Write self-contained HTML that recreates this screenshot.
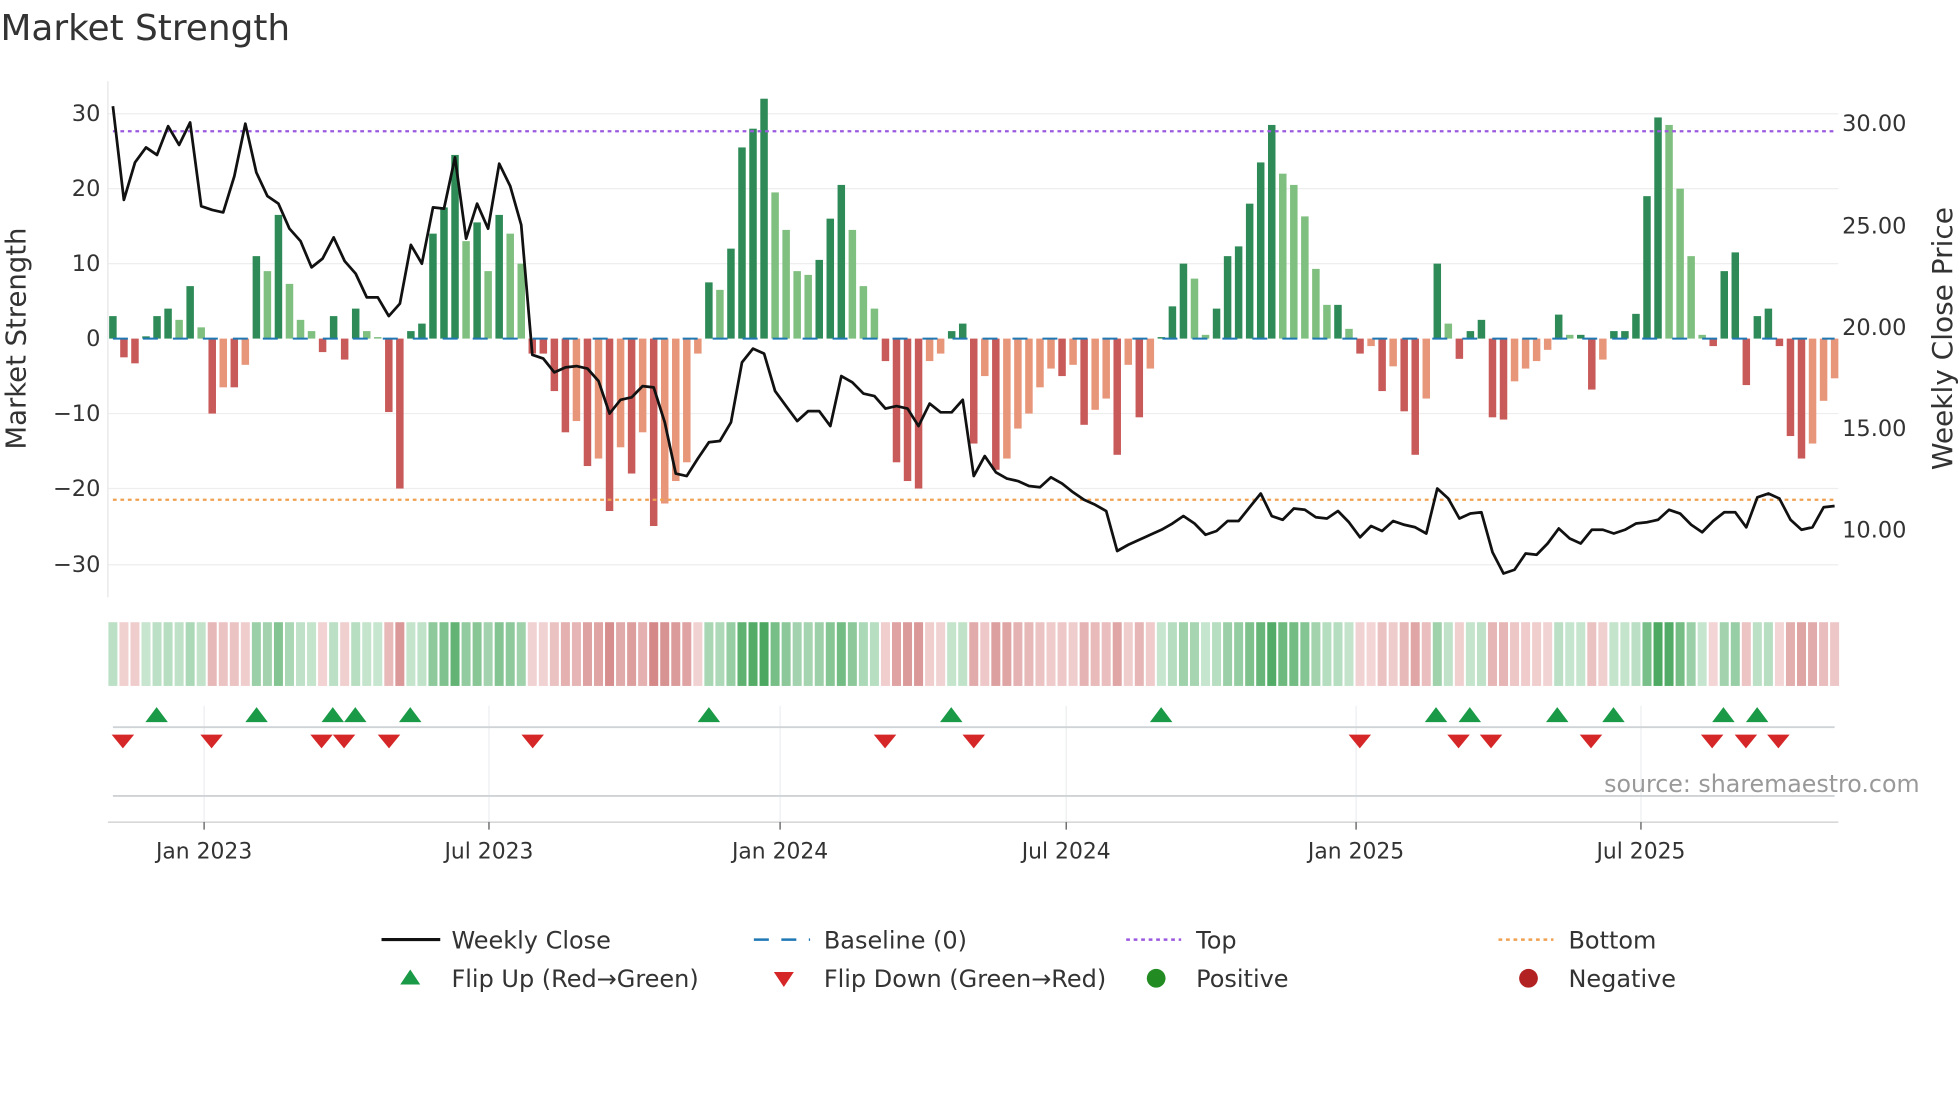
<!DOCTYPE html>
<html><head><meta charset="utf-8"><style>
html,body{margin:0;padding:0;background:#fff;width:1960px;height:1102px;overflow:hidden}
svg{display:block;font-family:"DejaVu Sans","Liberation Sans",sans-serif}
</style></head><body>
<svg id="s" width="1960" height="1102" viewBox="0 0 1568 882" xmlns="http://www.w3.org/2000/svg">
<text x="0" y="32" font-size="28.7" fill="#333">Market Strength</text>
<g stroke="#eeeeee" stroke-width="1">
<line x1="86" x2="1471" y1="91" y2="91"/><line x1="86" x2="1471" y1="151" y2="151"/><line x1="86" x2="1471" y1="211" y2="211"/><line x1="86" x2="1471" y1="331" y2="331"/><line x1="86" x2="1471" y1="391" y2="391"/><line x1="86" x2="1471" y1="452" y2="452"/>
</g>
<line x1="86" x2="86" y1="65" y2="478" stroke="#e6e6e6"/>
<g font-size="18" fill="#333" text-anchor="end">
<text x="80" y="97">30</text><text x="80" y="157">20</text><text x="80" y="217">10</text><text x="80" y="277">0</text><text x="80" y="337">−10</text><text x="80" y="397">−20</text><text x="80" y="458">−30</text>
</g>
<g font-size="18" fill="#333">
<text x="1474" y="105">30.00</text><text x="1474" y="187">25.00</text><text x="1474" y="268">20.00</text><text x="1474" y="349">15.00</text><text x="1474" y="430">10.00</text>
</g>
<text transform="translate(20,271) rotate(-90)" font-size="22" fill="#333" text-anchor="middle">Market Strength</text>
<text transform="translate(1562,271) rotate(-90)" font-size="22.4" fill="#333" text-anchor="middle">Weekly Close Price</text>
<g id="bars"></g>
<line x1="90" x2="1468" y1="271" y2="271" stroke="#1f77b4" stroke-width="1.6" stroke-dasharray="12,12"/>
<line x1="90" x2="1468" y1="105" y2="105" stroke="#9b59e0" stroke-width="1.8" stroke-dasharray="3,3"/>
<line x1="90" x2="1468" y1="400" y2="400" stroke="#f0a050" stroke-width="1.8" stroke-dasharray="3,3"/>
<polyline id="price" fill="none" stroke="#111" stroke-width="2.2" stroke-linejoin="round"/>
<g id="heat"></g>
<g stroke="#eceef0" stroke-width="1">
<line x1="163" x2="163" y1="565" y2="658"/><line x1="391" x2="391" y1="565" y2="658"/><line x1="624" x2="624" y1="565" y2="658"/><line x1="853" x2="853" y1="565" y2="658"/><line x1="1085" x2="1085" y1="565" y2="658"/><line x1="1313" x2="1313" y1="565" y2="658"/>
</g>
<line x1="90" x2="1468" y1="582" y2="582" stroke="#cfd3d6" stroke-width="1.5"/>
<line x1="90" x2="1468" y1="637" y2="637" stroke="#cfd3d6" stroke-width="1.5"/>
<line x1="86" x2="1471" y1="658" y2="658" stroke="#cccccc" stroke-width="1"/>
<g id="flips"></g>
<text x="1536" y="634" font-size="19" fill="#999" text-anchor="end">source: sharemaestro.com</text>
<g stroke="#555"><line x1="163" x2="163" y1="658" y2="664"/><line x1="391" x2="391" y1="658" y2="664"/><line x1="624" x2="624" y1="658" y2="664"/><line x1="853" x2="853" y1="658" y2="664"/><line x1="1085" x2="1085" y1="658" y2="664"/><line x1="1313" x2="1313" y1="658" y2="664"/></g>
<g font-size="17.5" fill="#333" text-anchor="middle">
<text x="163" y="687">Jan 2023</text><text x="391" y="687">Jul 2023</text><text x="624" y="687">Jan 2024</text><text x="853" y="687">Jul 2024</text><text x="1085" y="687">Jan 2025</text><text x="1313" y="687">Jul 2025</text>
</g>
<g font-size="19.2" fill="#333">
<line x1="305" x2="352" y1="752" y2="752" stroke="#111" stroke-width="2.5"/><text x="361" y="759">Weekly Close</text>
<line x1="603" x2="648" y1="752" y2="752" stroke="#1f77b4" stroke-width="2" stroke-dasharray="12,10"/><text x="659" y="759">Baseline (0)</text>
<line x1="901" x2="945" y1="752" y2="752" stroke="#9b59e0" stroke-width="2" stroke-dasharray="3,3"/><text x="957" y="759">Top</text>
<line x1="1199" x2="1243" y1="752" y2="752" stroke="#f0a050" stroke-width="2" stroke-dasharray="3,3"/><text x="1255" y="759">Bottom</text>
<polygon points="320,788 336,788 328,776" fill="#1a9a46"/><text x="361" y="790">Flip Up (Red→Green)</text>
<polygon points="619,778 635,778 627,790" fill="#d62728"/><text x="659" y="790">Flip Down (Green→Red)</text>
<circle cx="925" cy="783" r="7.5" fill="#228b22"/><text x="957" y="790">Positive</text>
<circle cx="1223" cy="783" r="7.5" fill="#b22222"/><text x="1255" y="790">Negative</text>
</g>
</svg>
<script>
var v=[3,-2.5,-3.3,0.3,3,4,2.5,7,1.5,-10,-6.5,-6.5,-3.5,11,9,16.5,7.3,2.5,1,-1.8,3,-2.8,4,1,0.2,-9.8,-20,1,2,14,17.5,24.5,13,15.5,9,16.5,14,10,-2,-2,-7,-12.5,-11,-17,-16,-23,-14.5,-18,-12.5,-25,-22,-19,-16.5,-2,7.5,6.5,12,25.5,28,32,19.5,14.5,9,8.5,10.5,16,20.5,14.5,7,4,-3,-16.5,-19,-20,-3,-2,1,2,-14,-5,-17.5,-16,-12,-10,-6.5,-4,-5,-3.5,-11.5,-9.5,-8,-15.5,-3.5,-10.5,-4,0.2,4.3,10,8,0.5,4,11,12.3,18,23.5,28.5,22,20.5,16.3,9.3,4.5,4.5,1.3,-2,-1,-7,-3.7,-9.7,-15.5,-8,10,2,-2.7,1,2.5,-10.5,-10.8,-5.7,-4,-3,-1.5,3.2,0.5,0.5,-6.8,-2.8,1,1,3.3,19,29.5,28.5,20,11,0.5,-1,9,11.5,-6.2,3,4,-1,-13,-16,-14,-8.3,-5.3];
var n=v.length,x0=90,dx=(1468-90)/(n-1),ns="http://www.w3.org/2000/svg";
function el(t,a,p){var e=document.createElementNS(ns,t);for(var k in a)e.setAttribute(k,a[k]);p.appendChild(e);return e}
var B=document.getElementById('bars'),H=document.getElementById('heat');
for(var i=0;i<n;i++){var x=x0+i*dx,val=v[i],pr=i?v[i-1]:0,c;
 if(val>=0)c=(val>=pr)?'#2e8b57':'#7fbf7f';else c=(val<=pr)?'#c95a5a':'#e8967a';
 var h=Math.abs(val)*6;el('rect',{x:x-3,y:val>=0?271-h:271,width:6,height:h,fill:c},B);
 var m=Math.min(1,Math.abs(val)/30),col;
 if(val>=0){var a=[200,230,208],b=[76,168,96];}else{var a=[244,216,216],b=[205,120,120];}
 col='rgb('+[0,1,2].map(function(j){return Math.round(a[j]+(b[j]-a[j])*m)}).join(',')+')';
 el('rect',{x:x-3.6,y:498,width:7.2,height:51,fill:col},H);}
var p=[85,160,130,118,124,101,116,98,165,168,170,141,99,138,157,163,183,193,214,207,190,209,219,238,238,253,243,196,211,166,167,126,191,163,183,131,149,180,284,287,298,294,293,295,305,331,320,318,309,310,338,379,381,367,354,353,338,290,279,283,313,325,337,329,329,341,301,306,315,317,327,325,327,341,323,330,330,320,381,365,378,383,385,389,390,382,387,394,400,404,409,441,436,432,428,424,419,413,419,428,425,417,417,406,395,413,416,407,408,414,415,409,418,430,421,425,417,420,422,427,391,399,415,411,410,442,459,456,443,444,435,423,431,435,424,424,427,424,419,418,416,408,411,420,426,417,410,410,422,398,395,399,416,424,422,406,405];
var pts=[];for(var i=0;i<p.length;i++)pts.push((x0+i*(1468-90)/(p.length-1)).toFixed(1)+','+p[i]);
document.getElementById('price').setAttribute('points',pts.join(' '));
var F=document.getElementById('flips');
[125,205,266,284,328,567,761,929,1149,1176,1246,1291,1379,1406].forEach(function(x){el('polygon',{points:(x-9)+',578 '+(x+9)+',578 '+x+',566',fill:'#1a9a46'},F)});
[98,169,257,275,311,426,708,779,1088,1167,1193,1273,1370,1397,1423].forEach(function(x){el('polygon',{points:(x-9)+',588 '+(x+9)+',588 '+x+',599',fill:'#d62728'},F)});
</script>
</body></html>
